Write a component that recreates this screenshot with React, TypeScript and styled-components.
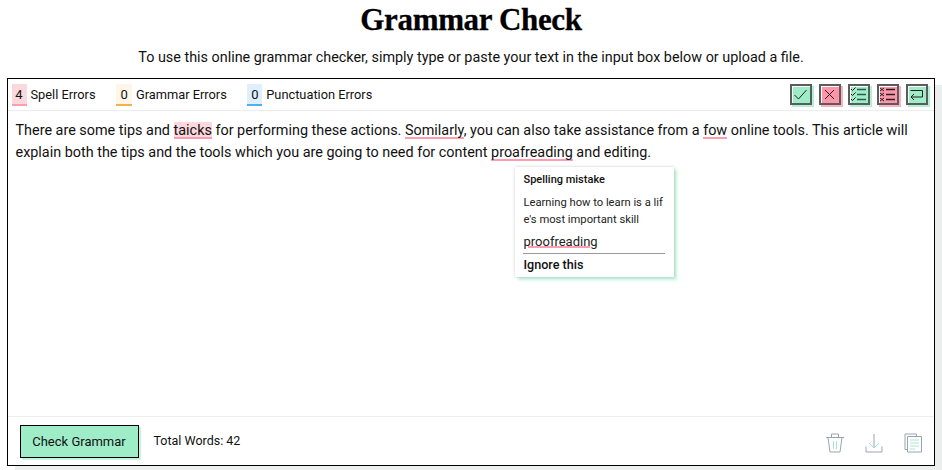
import styled, { createGlobalStyle } from "styled-components";

const GlobalStyle = createGlobalStyle`
  html, body {
    margin: 0;
    padding: 0;
    background: #fff;
    color: #111;
    font-family: Roboto, "Liberation Sans", sans-serif;
  }
`;

const Page = styled.div`
  width: 942px;
  height: 470px;
  overflow: hidden;
  display: flex;
  flex-direction: column;
  align-items: center;
`;

const Title = styled.h1`
  margin: 0;
  height: 40px;
  font-family: "Liberation Serif", serif;
  font-size: 31px;
  line-height: 40px;
  font-weight: 700;
  letter-spacing: -0.35px;
  color: #000;
  -webkit-text-stroke: 0.3px #000;
`;

const Subtitle = styled.p`
  margin: 8px 0 0;
  height: 20px;
  font-size: 14.38px;
  line-height: 20px;
  color: #111;
`;

const Panel = styled.div`
  margin: 10px 0 0 -1px;
  width: 926px;
  height: 386px;
  border: 1px solid #000;
  box-shadow: 8px 7px 0 #eceeed;
  background: #fff;
  display: flex;
  flex-direction: column;
`;

const Toolbar = styled.div`
  height: 31px;
  border-bottom: 1px solid #ececec;
  display: flex;
  align-items: center;
  padding: 0 4px;
`;

const Counter = styled.div`
  display: flex;
  align-items: center;
  margin-right: 20.5px;
  font-size: 12.8px;
  color: #111;
`;

const Count = styled.span<{ $bg: string; $line: string; $w: number }>`
  width: ${(p) => p.$w}px;
  height: 22px;
  margin-right: 4px;
  box-sizing: border-box;
  background: ${(p) => p.$bg};
  border-bottom: 2px solid ${(p) => p.$line};
  text-align: center;
  font-size: 13px;
  line-height: 21px;
`;

const ActionGroup = styled.div`
  margin-left: auto;
  display: flex;
  gap: 7px;
  padding-right: 2px;
`;

const ActionButton = styled.button<{ $tone: "green" | "red" }>`
  width: 22px;
  height: 21px;
  padding: 0;
  border: 2px solid #5c5c5c;
  background: ${(p) => (p.$tone === "green" ? "#9eecc8" : "#ff95a8")};
  box-shadow: inset 1px 1px 0 #fff, 2px 2px 0 ${(p) => (p.$tone === "green" ? "#b4f0d4" : "#ffb0be")};
  display: flex;
  align-items: center;
  justify-content: center;
`;

const Editor = styled.div`
  position: relative;
  flex: 1;
  padding: 9px 8px 0;
  font-size: 14.4px;
  line-height: 22px;
  color: #111;
`;

const Misspelled = styled.span<{ $active?: boolean }>`
  background: ${(p) => (p.$active ? "#fbd7de" : "transparent")};
  box-shadow: inset 0 -2px 0 #ff9db0;
`;

const Popover = styled.div`
  position: absolute;
  left: 507px;
  top: 56px;
  width: 159px;
  height: 110px;
  box-sizing: border-box;
  padding: 5px 9px 0;
  background: #fff;
  box-shadow: 0 0 3px rgba(0, 0, 0, 0.2), 3px 3px 3px #c4f3de;
`;

const PopoverTitle = styled.div`
  font-size: 11px;
  line-height: 16px;
  font-weight: 500;
  color: #111;
`;

const PopoverText = styled.div`
  margin-top: 6px;
  width: 141px;
  font-size: 11.2px;
  line-height: 17px;
  word-break: break-all;
  color: #222;
`;

const Suggestion = styled.div`
  margin: 4px 0 0 -1px;
  height: 20px;
  padding: 0 1px 1px;
  border-bottom: 1px solid #999;
  font-size: 13px;
  line-height: 19px;
  color: #222;
`;

const SuggestionWord = styled.span`
  position: relative;
  &::after {
    content: "";
    position: absolute;
    left: 4px;
    right: 8px;
    bottom: 1px;
    height: 2px;
    background: #ff9db0;
  }
`;

const IgnoreLink = styled.div`
  margin-top: 2px;
  font-size: 12.6px;
  line-height: 17px;
  font-weight: 500;
  color: #111;
`;

const Footer = styled.div`
  height: 48px;
  border-top: 1px solid #efefef;
  display: flex;
  align-items: center;
  padding: 0 12px;
`;

const CheckButton = styled.button`
  width: 119px;
  height: 33px;
  padding: 0;
  border: 1px solid #000;
  background: #9eecc8;
  box-shadow: 2px 2px 0 #c5f3de;
  font-family: Roboto, "Liberation Sans", sans-serif;
  font-size: 13px;
  color: #111;
`;

const WordCount = styled.span`
  margin: -2px 0 0 15px;
  font-size: 12.5px;
  color: #111;
`;

const FooterIcons = styled.div`
  margin: 3px 0 0 auto;
  display: flex;
  align-items: center;
  gap: 21px;
`;

const Glyph = styled.svg`
  display: block;
  fill: none;
  stroke-width: 1;
`;

const CheckIcon = () => (
  <Glyph width="15" height="13" viewBox="0 0 15 13" stroke="#222" strokeWidth="1.3">
    <path d="M1.5 7l4 4L13.500 2" />
  </Glyph>
);

const CrossIcon = () => (
  <Glyph width="13" height="13" viewBox="0 0 13 13" stroke="#222" strokeWidth="1.3">
    <path d="M2 2l9 9M11 2l-9 9" />
  </Glyph>
);

const CheckListIcon = () => (
  <Glyph width="17" height="15" viewBox="0 0 17 15" stroke="#2d5a47" strokeWidth="1.2">
    <path d="M1 2l1.500 1.500L5.500 .5M1 7l1.500 1.500L5.500 5.500M1 12l1.500 1.500L5.500 10.500" stroke="#111" />
    <path d="M7 2.500h9M7 7.500h9M7 12.500h9" strokeWidth="1.500" />
  </Glyph>
);

const CrossListIcon = () => (
  <Glyph width="17" height="15" viewBox="0 0 17 15" stroke="#222" strokeWidth="1.3">
    <path d="M1 1l4 3M5 1L1 4M1 6l4 3M5 6L1 9M1 11l4 3M5 11l-4 3" />
    <path d="M7 2.500h9M7 7.500h9M7 12.500h9" strokeWidth="1.300" />
  </Glyph>
);

const ReturnIcon = () => (
  <Glyph width="15" height="13" viewBox="0 0 15 13" stroke="#222" strokeWidth="1.200">
    <path d="M1.500 2.500h12V9H2M5 6L2 9l3 3" />
  </Glyph>
);

const TrashIcon = () => (
  <Glyph width="18" height="20" viewBox="0 0 18 20" stroke="#9aa3b5" strokeWidth="1.400">
    <path d="M0 4.500h18M5.500 4.500V1h7v3.500M2 4.500L4 19h10l2-14.500" />
    <path d="M7.500 8v8M10.500 8v8" stroke="#a6e8cb" />
  </Glyph>
);

const DownloadIcon = () => (
  <Glyph width="18" height="20" viewBox="0 0 18 20" stroke="#9aa3b5" strokeWidth="1.400">
    <path d="M1 13.500V19h16v-5.500" />
    <path d="M9 1v14" />
    <path d="M4 10l5 5 5-5" stroke="#a6e8cb" />
  </Glyph>
);

const CopyIcon = () => (
  <Glyph width="18" height="20" viewBox="0 0 18 20" stroke="#9aa3b5" strokeWidth="1.400">
    <path d="M3.500 16.500H1V1h11.500v2.500" />
    <path d="M3.500 3.500H17.500V19H3.500z" />
    <path d="M6 7h9M6 10h9M6 13h9M6 16h5" stroke="#a6e8cb" strokeWidth="1.200" />
  </Glyph>
);

export default function App() {
  return (
    <>
      <GlobalStyle />
      <Page>
        <Title>Grammar Check</Title>
        <Subtitle>
          To use this online grammar checker, simply type or paste your text in the input box below or upload a file.
        </Subtitle>
        <Panel>
          <Toolbar>
            <Counter>
              <Count $bg="#fbd7de" $line="#ff9db0" $w={15}>4</Count>
              Spell Errors
            </Counter>
            <Counter>
              <Count $bg="#fff6ea" $line="#f7b04e" $w={16}>0</Count>
              Grammar Errors
            </Counter>
            <Counter>
              <Count $bg="#dff0fc" $line="#4fb0f0" $w={15}>0</Count>
              Punctuation Errors
            </Counter>
            <ActionGroup>
              <ActionButton $tone="green"><CheckIcon /></ActionButton>
              <ActionButton $tone="red"><CrossIcon /></ActionButton>
              <ActionButton $tone="green"><CheckListIcon /></ActionButton>
              <ActionButton $tone="red"><CrossListIcon /></ActionButton>
              <ActionButton $tone="green"><ReturnIcon /></ActionButton>
            </ActionGroup>
          </Toolbar>
          <Editor>
            There are some tips and <Misspelled $active>taicks</Misspelled> for performing these actions.{" "}
            <Misspelled>Somilarly</Misspelled>, you can also take assistance from a <Misspelled>fow</Misspelled> online
            tools. This article will explain both the tips and the tools which you are going to need for content{" "}
            <Misspelled>proafreading</Misspelled> and editing.
            <Popover>
              <PopoverTitle>Spelling mistake</PopoverTitle>
              <PopoverText>Learning how to learn is a life's most important skill</PopoverText>
              <Suggestion><SuggestionWord>proofreading</SuggestionWord></Suggestion>
              <IgnoreLink>Ignore this</IgnoreLink>
            </Popover>
          </Editor>
          <Footer>
            <CheckButton>Check Grammar</CheckButton>
            <WordCount>Total Words: 42</WordCount>
            <FooterIcons>
              <TrashIcon />
              <DownloadIcon />
              <CopyIcon />
            </FooterIcons>
          </Footer>
        </Panel>
      </Page>
    </>
  );
}
